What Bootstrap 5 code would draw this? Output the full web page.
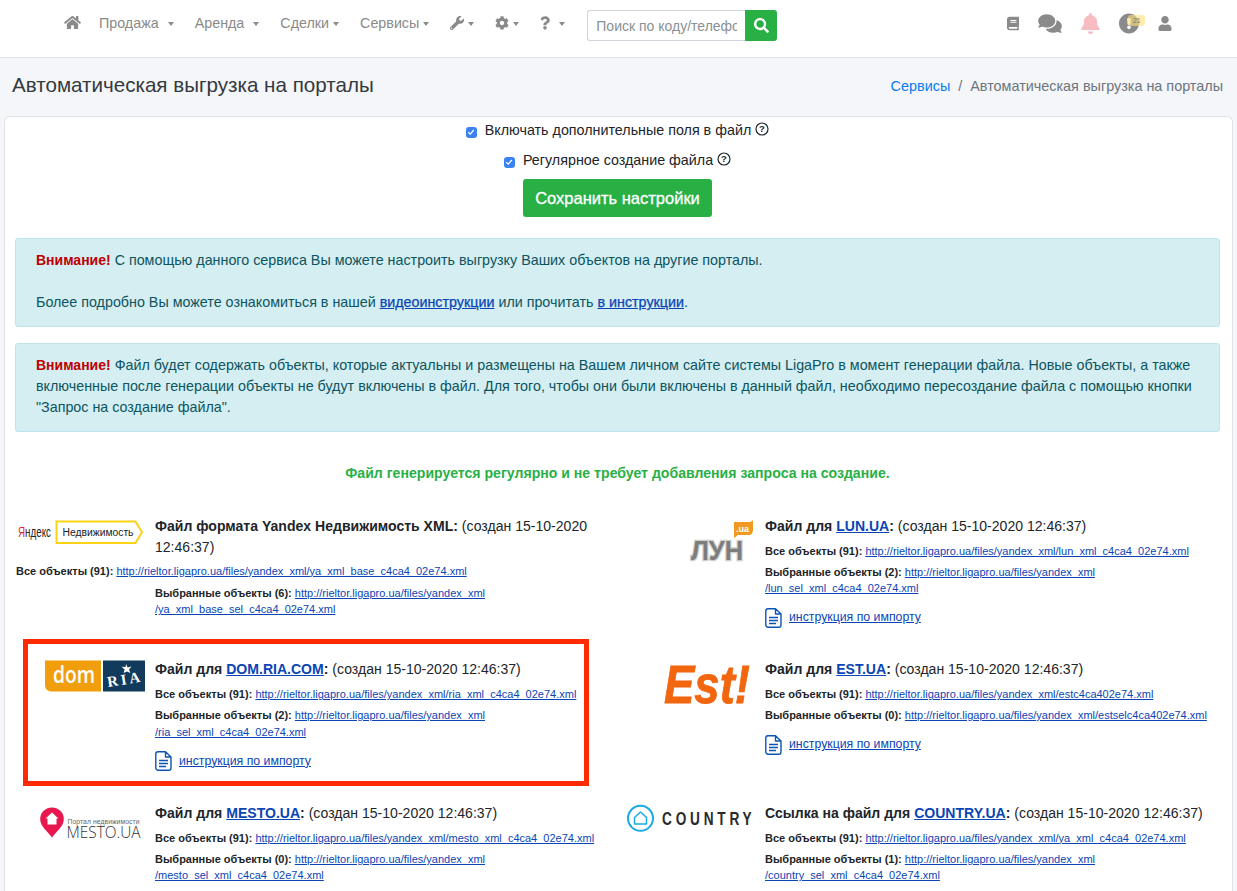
<!DOCTYPE html>
<html lang="ru">
<head>
<meta charset="utf-8">
<title>Автоматическая выгрузка на порталы</title>
<link href="https://cdn.jsdelivr.net/npm/bootstrap@5.3.0/dist/css/bootstrap.min.css" rel="stylesheet">
<style>
html,body{height:100%;overflow:hidden}
body{background:#f4f6f9;font-family:"Liberation Sans",Arial,sans-serif;font-size:14.3px;line-height:21px;color:#212529}
.top-bar{height:58px;background:#fff;border-bottom:1px solid #dee2e6;padding:10px 0 0 64px}
.menu-row{gap:21px;height:31px}
.menu-item{color:#8a8a8a;font-size:14.3px;text-decoration:none;white-space:nowrap;padding-bottom:4px}
.menu-item.home-link{margin-right:-3px}
.menu-item.dropdown-toggle::after{margin-left:4px;border-top-width:4px;border-left-width:3.5px;border-right-width:3.5px;vertical-align:2px}
.menu-item.wide.dropdown-toggle::after{margin-left:9px}
.menu-ico{fill:#8a8a8a;display:inline-block;vertical-align:-2px}
.search-wrap{width:190px;height:31px;margin-left:1px}
.search-input{width:158px;height:31px;border:1px solid #ced4da;border-right:0;border-radius:3px 0 0 3px;padding:0 8px;font-size:14px;color:#6c757d;background:#fff;outline:0;font-family:inherit}
.search-input::placeholder{color:#8a9096;opacity:1}
.search-btn{width:32px;height:31px;padding:0;background:#28b045;border:0;border-radius:0 3px 3px 0;display:flex;align-items:center;justify-content:center}
.right-icons{position:relative;margin-left:230px;gap:19px;height:31px;padding-bottom:4px}
.bell-ico{fill:#f7bcc2}
.warn-badge{position:absolute;left:121px;top:5px;width:17px;height:11px;background:rgba(255,225,120,.6);border-radius:3px;font-size:7px;line-height:11px;text-align:center;color:#777}
.page-head{height:58px;padding:0 14px 0 12px}
.page-title{font-size:20.6px;line-height:24px;font-weight:400;color:#343a40;margin:0 0 5px}
.crumbs{font-size:14.4px;color:#6c757d;gap:8px;margin-bottom:1px}
.crumbs a{color:#0a7bf0;text-decoration:none}
.main-box{margin:0 4px;background:#fff;border:1px solid #dfe2e6;border-bottom:0;border-radius:6px 6px 0 0;padding:0 12px 0 10px;height:calc(100vh - 116px);overflow:hidden}
.check-line{height:29px;gap:8px;color:#212529}
.check-line.line-a{margin-top:-1px}
.check-line.line-b{margin-top:1px}
.q-ico{vertical-align:-1px}
.tick{width:11px;height:11px;margin-top:3px;background:#3b82f0;border-radius:3px;display:flex;align-items:center;justify-content:center;flex:none}
.save-btn{background:#28b045;border:0;color:#fff;font-size:16.5px;-webkit-text-stroke:.3px #fff;height:38px;width:189px;border-radius:3px;padding:0}
.save-btn:hover{background:#28b045;color:#fff}
.note{background:#d5eef2;border:1px solid #bee5eb;color:#0c5460;border-radius:3px;padding:11px 20px 12px;margin:0 0 16px;height:89px}
.note.note-first{margin-top:21px}
.note b{color:#c00000;font-size:14px}
.note a,.file-text a{color:#0b45b5}
.note a{-webkit-text-stroke:.25px #0b45b5}
.regen{color:#28b045;font-weight:700;font-size:14.1px;text-align:center;height:20px;line-height:20px;margin-top:31px}
.files-grid{display:grid;grid-template-columns:610px 595px;grid-auto-rows:143.6px;margin-top:32.7px}
.file-cell{position:relative}
.logo-svg{display:block;width:130px;height:50px;flex:none;overflow:visible}
.head-row{gap:10px}
.title-line{line-height:21px;font-size:14.05px}
.title-line a{font-weight:700}
.sub-line{font-size:11px;line-height:16.5px;margin-top:4.5px}
.sub-line.first{margin-top:6px}
.sub-line.under-logo{margin:-3px 0 0 1px}
.sub-indent{margin:5.5px 0 0 140px}
.guide{font-size:12.3px;margin-top:11px;gap:7px;height:20px;align-items:center}
.red-frame{position:absolute;left:8px;top:-20px;width:566px;height:147px;border:5px solid #ff2a00;pointer-events:none}
</style>
</head>
<body>
<svg width="0" height="0" class="position-absolute">
<defs>
<symbol id="doc" viewBox="0 0 17 20"><path d="M3 .8h7.5L16 6v11a2.2 2.2 0 0 1-2.2 2.2H3A2.2 2.2 0 0 1 .8 17V3A2.2 2.2 0 0 1 3 .8zM10.5 .8V6H16M4 9.5h9M4 12.5h9M4 15.5h7" fill="none" stroke="#0b55b5" stroke-width="1.4" stroke-linejoin="round"/></symbol>
<symbol id="qmark" viewBox="0 0 14 14"><circle cx="7" cy="7" r="6" fill="none" stroke="#212529" stroke-width="1.2"/><text x="7" y="10.3" font-size="9.5" font-weight="700" text-anchor="middle" fill="#212529" font-family="Liberation Sans">?</text></symbol>
</defs>
</svg>
<nav class="top-bar d-flex align-items-start">
  <div class="menu-row d-flex align-items-center">
    <a class="menu-item home-link" href="#"><svg class="menu-ico" width="17" height="15" viewBox="0 0 576 512"><path d="M280.37 148.26L96 300.11V464a16 16 0 0 0 16 16l112.06-.29a16 16 0 0 0 15.92-16V368a16 16 0 0 1 16-16h64a16 16 0 0 1 16 16v95.64a16 16 0 0 0 16 16.05L464 480a16 16 0 0 0 16-16V300L295.67 148.26a12.19 12.19 0 0 0-15.3 0zM571.6 251.47L488 182.56V44.05a12 12 0 0 0-12-12h-56a12 12 0 0 0-12 12v72.61L318.47 43a48 48 0 0 0-61 0L4.34 251.47a12 12 0 0 0-1.6 16.9l25.5 31A12 12 0 0 0 45.15 301l235.22-193.74a12.19 12.19 0 0 1 15.3 0L530.9 301a12 12 0 0 0 16.9-1.6l25.5-31a12 12 0 0 0-1.7-16.93z"/></svg></a>
    <a class="menu-item wide dropdown-toggle" href="#">Продажа</a>
    <a class="menu-item wide dropdown-toggle" href="#">Аренда</a>
    <a class="menu-item dropdown-toggle" href="#">Сделки</a>
    <a class="menu-item dropdown-toggle" href="#">Сервисы</a>
    <a class="menu-item dropdown-toggle" href="#"><svg class="menu-ico" width="14" height="14" viewBox="0 0 512 512"><path d="M507.73 109.1c-2.24-9.03-13.54-12.09-20.12-5.51l-74.36 74.36-67.88-11.31-11.31-67.88 74.36-74.36c6.62-6.62 3.43-17.9-5.66-20.16-47.38-11.74-99.55.91-136.58 37.93-39.64 39.64-50.55 97.1-34.05 147.2L18.74 402.76c-24.99 24.99-24.99 65.51 0 90.5 24.99 24.99 65.51 24.99 90.5 0l213.21-213.21c50.12 16.71 107.47 5.68 147.37-34.22 37.07-37.07 49.7-89.32 37.91-136.73zM64 472c-13.25 0-24-10.75-24-24 0-13.26 10.75-24 24-24s24 10.74 24 24c0 13.25-10.75 24-24 24z"/></svg></a>
    <a class="menu-item dropdown-toggle" href="#"><svg class="menu-ico" width="14" height="14" viewBox="0 0 512 512"><path d="M487.4 315.7l-42.6-24.6c4.3-23.2 4.3-47 0-70.2l42.6-24.6c4.9-2.8 7.1-8.6 5.5-14-11.1-35.6-30-67.8-54.7-94.6-3.8-4.1-10-5.1-14.8-2.3L380.8 110c-17.9-15.4-38.5-27.3-60.8-35.1V25.8c0-5.6-3.9-10.5-9.4-11.7-36.7-8.2-74.3-7.8-109.2 0-5.5 1.2-9.4 6.1-9.4 11.7V75c-22.2 7.9-42.8 19.8-60.8 35.1L88.7 85.5c-4.9-2.8-11-1.9-14.8 2.3-24.7 26.7-43.6 58.9-54.7 94.6-1.7 5.4.6 11.2 5.5 14L67.3 221c-4.3 23.2-4.3 47 0 70.2l-42.6 24.6c-4.9 2.8-7.1 8.6-5.5 14 11.1 35.6 30 67.8 54.7 94.6 3.8 4.1 10 5.1 14.8 2.3l42.6-24.6c17.9 15.4 38.5 27.3 60.8 35.1v49.2c0 5.6 3.9 10.5 9.4 11.7 36.7 8.2 74.3 7.8 109.2 0 5.5-1.2 9.4-6.1 9.4-11.7v-49.2c22.2-7.9 42.8-19.8 60.8-35.1l42.6 24.6c4.9 2.8 11 1.9 14.8-2.3 24.7-26.7 43.6-58.9 54.7-94.6 1.5-5.5-.7-11.3-5.6-14.1zM256 336c-44.1 0-80-35.9-80-80s35.9-80 80-80 80 35.9 80 80-35.9 80-80 80z"/></svg></a>
    <a class="menu-item wide dropdown-toggle" href="#"><svg class="menu-ico" width="10" height="14" viewBox="0 0 384 512"><path d="M202.021 0C122.202 0 70.503 32.703 29.914 91.026c-7.363 10.58-5.093 25.086 5.178 32.874l43.138 32.709c10.373 7.865 25.132 6.026 33.253-4.148 25.049-31.381 43.63-49.449 82.757-49.449 30.764 0 68.816 19.799 68.816 49.631 0 22.552-18.617 34.134-48.993 51.164-35.423 19.86-82.299 44.576-82.299 106.405V320c0 13.255 10.745 24 24 24h72.471c13.255 0 24-10.745 24-24v-5.773c0-42.86 125.268-44.645 125.268-160.627C377.504 66.256 286.902 0 202.021 0zM192 373.459c-38.196 0-69.271 31.075-69.271 69.271 0 38.195 31.075 69.27 69.271 69.27s69.271-31.075 69.271-69.271-31.075-69.27-69.271-69.27z"/></svg></a>
    <form class="search-wrap d-flex">
      <input class="search-input" type="text" placeholder="Поиск по коду/телефону">
      <button class="search-btn" type="button"><svg width="15" height="15" viewBox="0 0 512 512" fill="#fff"><path d="M505 442.7L405.3 343c-4.5-4.5-10.6-7-17-7H372c27.6-35.3 44-79.7 44-128C416 93.1 322.9 0 208 0S0 93.1 0 208s93.1 208 208 208c48.3 0 92.7-16.4 128-44v16.3c0 6.4 2.5 12.5 7 17l99.7 99.7c9.4 9.4 24.6 9.4 33.9 0l28.3-28.3c9.4-9.4 9.4-24.6.1-34zM208 336c-70.7 0-128-57.2-128-128 0-70.7 57.2-128 128-128 70.7 0 128 57.2 128 128 0 70.7-57.2 128-128 128z"/></svg></button>
    </form>
  </div>
  <div class="right-icons d-flex align-items-center">
    <svg class="menu-ico" width="12" height="15" viewBox="0 0 448 512"><path d="M448 360V24c0-13.3-10.7-24-24-24H96C43 0 0 43 0 96v320c0 53 43 96 96 96h328c13.3 0 24-10.7 24-24v-16c0-7.5-3.5-14.3-8.9-18.7-4.2-15.4-4.2-59.3 0-74.7 5.4-4.3 8.9-11.1 8.9-18.6zM128 134c0-3.3 2.7-6 6-6h212c3.3 0 6 2.7 6 6v20c0 3.3-2.7 6-6 6H134c-3.3 0-6-2.7-6-6v-20zm0 64c0-3.3 2.7-6 6-6h212c3.3 0 6 2.7 6 6v20c0 3.3-2.7 6-6 6H134c-3.3 0-6-2.7-6-6v-20zm253.4 250H96c-17.7 0-32-14.3-32-32 0-17.6 14.4-32 32-32h285.4c-1.9 17.1-1.9 46.9 0 64z"/></svg>
    <svg class="menu-ico" width="24" height="21" viewBox="0 0 576 512"><path d="M416 192c0-88.4-93.1-160-208-160S0 103.6 0 192c0 34.3 14.1 65.9 38 92-13.4 30.2-35.5 54.2-35.8 54.5-2.2 2.3-2.8 5.7-1.5 8.7S4.8 352 8 352c36.6 0 66.9-12.3 88.7-25 32.2 15.7 70.3 25 111.3 25 114.9 0 208-71.6 208-160zm122 220c23.9-26 38-57.7 38-92 0-66.9-53.5-124.2-129.3-148.1.9 6.6 1.3 13.3 1.3 20.1 0 105.9-107.7 192-240 192-10.8 0-21.3-.8-31.7-1.9C207.8 439.6 281.8 480 368 480c41 0 79.1-9.2 111.3-25 21.8 12.7 52.1 25 88.7 25 3.2 0 6.1-1.9 7.3-4.8 1.3-2.9.7-6.3-1.5-8.7-.3-.3-22.4-24.2-35.8-54.5z"/></svg>
    <svg class="menu-ico bell-ico" width="19" height="21" viewBox="0 0 448 512"><path d="M224 512c35.32 0 63.97-28.65 63.97-64H160.03c0 35.35 28.65 64 63.97 64zm215.39-149.71c-19.32-20.76-55.47-51.99-55.47-154.29 0-77.7-54.48-139.9-127.94-155.16V32c0-17.67-14.32-32-31.98-32s-31.98 14.33-31.98 32v20.84C118.56 68.1 64.08 130.3 64.08 208c0 102.3-36.15 133.53-55.47 154.29-6 6.45-8.66 14.16-8.61 21.71.11 16.4 12.98 32 32.1 32h383.8c19.12 0 32-15.6 32.1-32 .05-7.55-2.61-15.27-8.61-21.71z"/></svg>
    <svg class="menu-ico" width="20" height="21" viewBox="8 8 496 496"><path d="M504 256c0 136.997-111.043 248-248 248S8 392.997 8 256C8 119.083 119.043 8 256 8s248 111.083 248 248zm-248 50c-25.405 0-46 20.595-46 46s20.595 46 46 46 46-20.595 46-46-20.595-46-46-46zm-43.673-165.346l7.418 136c.347 6.364 5.609 11.346 11.982 11.346h48.546c6.373 0 11.635-4.982 11.982-11.346l7.418-136c.375-6.874-5.098-12.654-11.982-12.654h-63.383c-6.884 0-12.356 5.78-11.981 12.654z"/></svg>
    <span class="warn-badge">21</span>
    <svg class="menu-ico" width="14" height="15" viewBox="0 0 448 512"><path d="M224 256c70.7 0 128-57.3 128-128S294.7 0 224 0 96 57.3 96 128s57.3 128 128 128zm89.6 32h-16.7c-22.2 10.2-46.9 16-72.9 16s-50.6-5.8-72.9-16h-16.7C60.2 288 0 348.2 0 422.4V464c0 26.5 21.5 48 48 48h352c26.5 0 48-21.5 48-48v-41.6c0-74.2-60.2-134.4-134.4-134.4z"/></svg>
  </div>
</nav>

<header class="page-head d-flex justify-content-between align-items-center">
  <h1 class="page-title">Автоматическая выгрузка на порталы</h1>
  <div class="crumbs d-flex"><a href="#">Сервисы</a><span>/</span><span>Автоматическая выгрузка на порталы</span></div>
</header>

<main class="main-box">
  <div class="check-line line-a d-flex justify-content-center align-items-center"><span class="tick"><svg width="8" height="8" viewBox="0 0 8 8"><path d="M1.2 4.2l2 2 3.6-4.2" fill="none" stroke="#fff" stroke-width="1.2"/></svg></span><span>Включать дополнительные поля в файл <svg class="q-ico" width="14" height="14"><use href="#qmark"/></svg></span></div>
  <div class="check-line line-b d-flex justify-content-center align-items-center"><span class="tick"><svg width="8" height="8" viewBox="0 0 8 8"><path d="M1.2 4.2l2 2 3.6-4.2" fill="none" stroke="#fff" stroke-width="1.2"/></svg></span><span>Регулярное создание файла <svg class="q-ico" width="14" height="14"><use href="#qmark"/></svg></span></div>
  <div class="text-center mt-1 mb-0"><button class="btn save-btn" type="button">Сохранить настройки</button></div>

  <div class="note note-first"><b>Внимание!</b> С помощью данного сервиса Вы можете настроить выгрузку Ваших объектов на другие порталы.<br><br>Более подробно Вы можете ознакомиться в нашей <a href="#">видеоинструкции</a> или прочитать <a href="#">в инструкции</a>.</div>
  <div class="note"><b>Внимание!</b> Файл будет содержать объекты, которые актуальны и размещены на Вашем личном сайте системы LigaPro в момент генерации файла. Новые объекты, а также включенные после генерации объекты не будут включены в файл. Для того, чтобы они были включены в данный файл, необходимо пересоздание файла с помощью кнопки "Запрос на создание файла".</div>

  <div class="regen">Файл генерируется регулярно и не требует добавления запроса на создание.</div>

  <div class="files-grid">
    <section class="file-cell file-text">
      <div class="head-row d-flex">
        <svg class="logo-svg" viewBox="0 0 130 50"><text x="3" y="20.500" font-size="15" font-family="Liberation Sans" textLength="33" lengthAdjust="spacingAndGlyphs"><tspan fill="#e3252a">Я</tspan><tspan fill="#222">ндекс</tspan></text><path d="M41.500 5.500h79l6.500 10.700-6.500 10.800h-79z" fill="#fff" stroke="#fcd116" stroke-width="2"/><text x="47.500" y="20.300" font-size="10" fill="#222" font-family="Liberation Sans" textLength="71" lengthAdjust="spacingAndGlyphs">Недвижимость</text></svg>
        <div class="title-line"><b>Файл формата Yandex Недвижимость XML:</b> (создан 15-10-2020 12:46:37)</div>
      </div>
      <div class="sub-line under-logo"><b>Все объекты (91):</b> <a href="#">http://rieltor.ligapro.ua/files/yandex_xml/ya_xml_base_c4ca4_02e74.xml</a></div>
      <div class="sub-line sub-indent"><b>Выбранные объекты (6):</b> <a href="#">http://rieltor.ligapro.ua/files/yandex_xml<br>/ya_xml_base_sel_c4ca4_02e74.xml</a></div>
    </section>
    <section class="file-cell file-text">
      <div class="head-row d-flex">
        <svg class="logo-svg" viewBox="0 0 130 50"><path d="M109 6h15c2 0 3-1 4-2v10c0 3-2 5-4 5h-11l-4 3z" fill="#f19a21"/><text x="111" y="15.500" font-size="9" font-weight="700" fill="#fff" font-family="Liberation Sans">.ua</text><text x="66" y="44" font-size="27" font-weight="700" fill="#7d7d7d" stroke="#cfcfcf" stroke-width="2.600" paint-order="stroke" font-family="Liberation Sans" textLength="52" lengthAdjust="spacingAndGlyphs">ЛУН</text></svg>
        <div>
          <div class="title-line"><b>Файл для <a href="#">LUN.UA</a>:</b> (создан 15-10-2020 12:46:37)</div>
          <div class="sub-line first"><b>Все объекты (91):</b> <a href="#">http://rieltor.ligapro.ua/files/yandex_xml/lun_xml_c4ca4_02e74.xml</a></div>
          <div class="sub-line"><b>Выбранные объекты (2):</b> <a href="#">http://rieltor.ligapro.ua/files/yandex_xml<br>/lun_sel_xml_c4ca4_02e74.xml</a></div>
          <div class="guide d-flex"><svg width="17" height="20"><use href="#doc"/></svg><a href="#">инструкция по импорту</a></div>
        </div>
      </div>
    </section>
    <section class="file-cell file-text">
      <div class="head-row d-flex">
        <svg class="logo-svg" viewBox="0 0 130 50"><path d="M30 1.500h56v31H36a6 6 0 0 1-6-6z" fill="#f19e0c"/><rect x="88" y="1.500" width="42" height="31" fill="#123a5c"/><text x="38" y="23.500" font-size="23" font-weight="600" fill="#fff" font-family="Open Sans" textLength="42" lengthAdjust="spacingAndGlyphs">dom</text><path d="M111 5l1.600 3.600 4-1-2.600 3 1.400 3.400-3.400-1.600-3.400 1.600 1-3.600-3-2.600 4 .2z" fill="#fff"/><text transform="translate(93,28) rotate(-9)" font-size="15" font-weight="700" fill="#fff" font-family="Liberation Serif" textLength="33">RIA</text></svg>
        <div>
          <div class="title-line"><b>Файл для <a href="#">DOM.RIA.COM</a>:</b> (создан 15-10-2020 12:46:37)</div>
          <div class="sub-line first"><b>Все объекты (91):</b> <a href="#">http://rieltor.ligapro.ua/files/yandex_xml/ria_xml_c4ca4_02e74.xml</a></div>
          <div class="sub-line"><b>Выбранные объекты (2):</b> <a href="#">http://rieltor.ligapro.ua/files/yandex_xml<br>/ria_sel_xml_c4ca4_02e74.xml</a></div>
          <div class="guide d-flex"><svg width="17" height="20"><use href="#doc"/></svg><a href="#">инструкция по импорту</a></div>
        </div>
      </div>
      <div class="red-frame"></div>
    </section>
    <section class="file-cell file-text">
      <div class="head-row d-flex">
        <svg class="logo-svg" viewBox="0 0 130 50"><text x="39" y="43.500" font-size="54" font-weight="700" font-style="italic" fill="#f2660f" stroke="#f2660f" stroke-width=".8" font-family="Liberation Sans" textLength="86" lengthAdjust="spacingAndGlyphs">Est!</text></svg>
        <div>
          <div class="title-line"><b>Файл для <a href="#">EST.UA</a>:</b> (создан 15-10-2020 12:46:37)</div>
          <div class="sub-line first"><b>Все объекты (91):</b> <a href="#">http://rieltor.ligapro.ua/files/yandex_xml/estc4ca402e74.xml</a></div>
          <div class="sub-line"><b>Выбранные объекты (0):</b> <a href="#">http://rieltor.ligapro.ua/files/yandex_xml/estselc4ca402e74.xml</a></div>
          <div class="guide d-flex"><svg width="17" height="20"><use href="#doc"/></svg><a href="#">инструкция по импорту</a></div>
        </div>
      </div>
    </section>
    <section class="file-cell file-text">
      <div class="head-row d-flex">
        <svg class="logo-svg" viewBox="0 0 130 50"><path d="M37 4.400a11.800 11.800 0 0 1 11.800 11.800c0 7-7.300 12-11.800 18.200-4.500-6.200-11.800-11.200-11.800-18.200A11.800 11.800 0 0 1 37 4.400z" fill="#e8174f"/><path d="M37 9.500l6.500 6h-2v6h-9v-6h-2z" fill="#fff"/><text x="52.500" y="20.500" font-size="6.800" fill="#666" font-family="Liberation Sans" textLength="72">Портал недвижимости</text><text x="51.500" y="34.700" font-size="16.500" fill="#333" font-family="Open Sans" font-weight="300" textLength="74" lengthAdjust="spacingAndGlyphs">MESTO.UA</text></svg>
        <div>
          <div class="title-line"><b>Файл для <a href="#">MESTO.UA</a>:</b> (создан 15-10-2020 12:46:37)</div>
          <div class="sub-line first"><b>Все объекты (91):</b> <a href="#">http://rieltor.ligapro.ua/files/yandex_xml/mesto_xml_c4ca4_02e74.xml</a></div>
          <div class="sub-line"><b>Выбранные объекты (0):</b> <a href="#">http://rieltor.ligapro.ua/files/yandex_xml<br>/mesto_sel_xml_c4ca4_02e74.xml</a></div>
        </div>
      </div>
    </section>
    <section class="file-cell file-text">
      <div class="head-row d-flex">
        <svg class="logo-svg" viewBox="0 0 130 50"><circle cx="15.500" cy="15.300" r="12.500" fill="none" stroke="#1aa9e4" stroke-width="2"/><path d="M9.500 21v-6.500L15.500 9l6 5.500V21z" fill="none" stroke="#1aa9e4" stroke-width="1.500" stroke-linejoin="round"/><text transform="translate(37,21.700) scale(.78,1)" font-size="17.500" font-weight="700" fill="#2a2a2a" font-family="Liberation Sans" textLength="115">COUNTRY</text></svg>
        <div>
          <div class="title-line"><b>Ссылка на файл для <a href="#">COUNTRY.UA</a>:</b> (создан 15-10-2020 12:46:37)</div>
          <div class="sub-line first"><b>Все объекты (91):</b> <a href="#">http://rieltor.ligapro.ua/files/yandex_xml/ya_xml_c4ca4_02e74.xml</a></div>
          <div class="sub-line"><b>Выбранные объекты (1):</b> <a href="#">http://rieltor.ligapro.ua/files/yandex_xml<br>/country_sel_xml_c4ca4_02e74.xml</a></div>
        </div>
      </div>
    </section>
  </div>
</main>
</body>
</html>
